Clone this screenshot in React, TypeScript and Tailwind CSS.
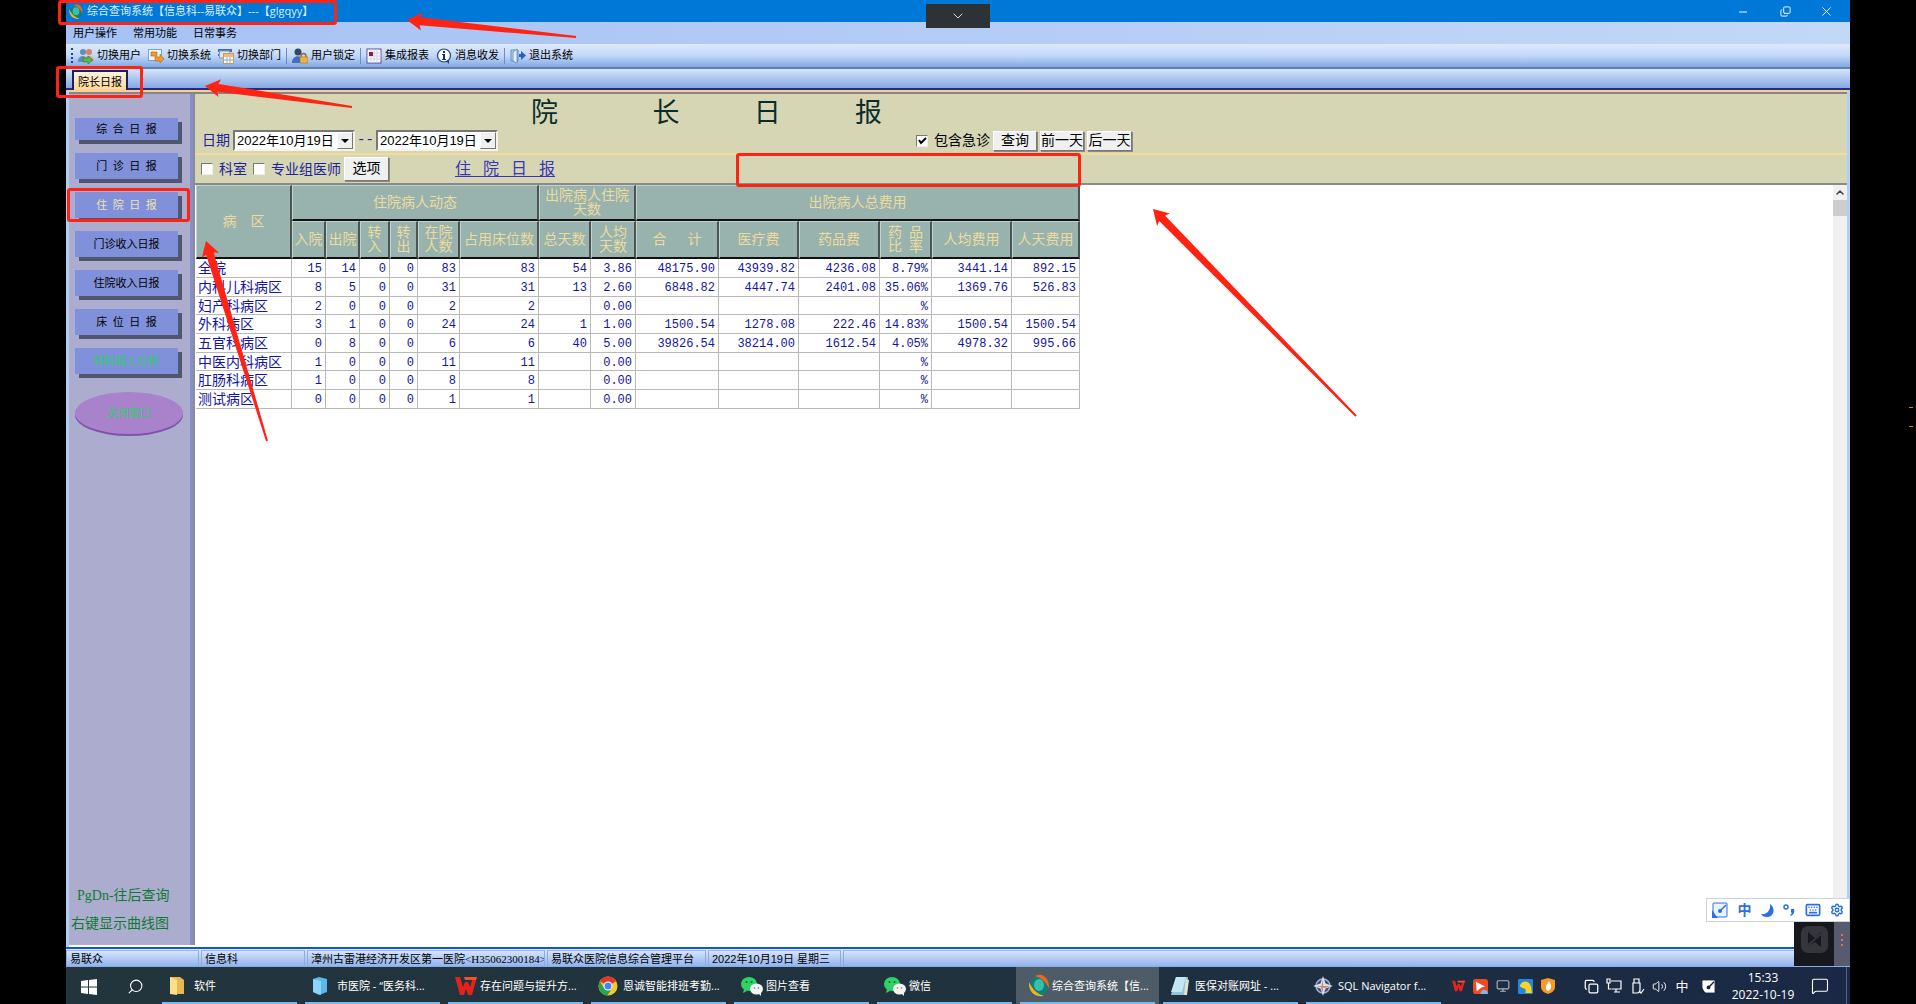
import React, { useState } from 'react';
import clsx from 'clsx';
import { ChevronDown, ChevronUp, Copy, Keyboard, MessageSquare, Minus, Monitor, Search, Settings, Volume2, X } from 'lucide-react';

const WARDS = [
  ['全院', '15', '14', '0', '0', '83', '83', '54', '3.86', '48175.90', '43939.82', '4236.08', '8.79%', '3441.14', '892.15'],
  ['内科儿科病区', '8', '5', '0', '0', '31', '31', '13', '2.60', '6848.82', '4447.74', '2401.08', '35.06%', '1369.76', '526.83'],
  ['妇产科病区', '2', '0', '0', '0', '2', '2', '', '0.00', '', '', '', '%', '', ''],
  ['外科病区', '3', '1', '0', '0', '24', '24', '1', '1.00', '1500.54', '1278.08', '222.46', '14.83%', '1500.54', '1500.54'],
  ['五官科病区', '0', '8', '0', '0', '6', '6', '40', '5.00', '39826.54', '38214.00', '1612.54', '4.05%', '4978.32', '995.66'],
  ['中医内科病区', '1', '0', '0', '0', '11', '11', '', '0.00', '', '', '', '%', '', ''],
  ['肛肠科病区', '1', '0', '0', '0', '8', '8', '', '0.00', '', '', '', '%', '', ''],
  ['测试病区', '0', '0', '0', '0', '1', '1', '', '0.00', '', '', '', '%', '', ''],
];

const COLUMN_WIDTHS = [
  'w-[96px]', 'w-[34px]', 'w-[34px]', 'w-[30px]', 'w-[28px]', 'w-[42px]', 'w-[79px]', 'w-[52px]',
  'w-[45px]', 'w-[83px]', 'w-[80px]', 'w-[81px]', 'w-[52px]', 'w-[80px]', 'w-[68px]',
];

const SUB_HEADERS = [
  '入院', '出院', '转\n入', '转\n出', '在院\n人数', '占用床位数', '总天数', '人均\n天数',
  '合      计', '医疗费', '药品费', '药  品\n比  率', '人均费用', '人天费用',
];

/* ---------- Icons ---------- */

const GlobeLogo = ({ className }: { className?: string }) => (
  <svg viewBox="0 0 24 24" className={className}>
    <ellipse cx="12" cy="12" rx="9" ry="10" fill="#0f7f78" />
    <ellipse cx="12" cy="11" rx="5" ry="6" fill="#37bfae" />
    <path d="M8 2c8-4 15 3 14 13-2-6-7-11-14-13z" fill="#f0641e" />
    <path d="M2 8c-1 9 6 16 15 14-7-2-12-7-15-14z" fill="#f6b321" />
  </svg>
);

const UsersIcon = () => (
  <svg viewBox="0 0 16 16" className="h-4 w-4">
    <circle cx="5" cy="4" r="3" fill="#5d8fb8" />
    <path d="M0 14c0-8 9-8 10 0z" fill="#5d8fb8" />
    <circle cx="11" cy="4" r="3" fill="#d98166" />
    <path d="M6 13c0-7 9-7 10 0z" fill="#e0a08a" />
    <path d="M5 10h5V8l5 4-5 4v-2H5z" fill="#57b847" stroke="#2b7a25" strokeWidth=".6" />
  </svg>
);

const SystemIcon = () => (
  <svg viewBox="0 0 16 16" className="h-4 w-4">
    <rect x=".5" y="1.500" width="13" height="11" fill="#e9f4fb" stroke="#6fa6c9" />
    <path d="M3 4h6v5h3V6l4 5-4 4v-2H7V8H3z" fill="#f09a2c" stroke="#b4620f" strokeWidth=".6" />
  </svg>
);

const DeptIcon = () => (
  <svg viewBox="0 0 16 16" className="h-4 w-4">
    <path d="M0 1h14v3H0zM0 6h5v2H0z" fill="#3f6fb5" />
    <rect x="1.500" y="3" width="10" height="7" fill="#dbe7f6" stroke="#7b9bc7" />
    <rect x="5.500" y="5.500" width="10" height="10" fill="#fff" stroke="#d6984a" />
    <path d="M6 6h9v3H6z" fill="#f2bd72" />
    <path d="M9 9v6M12 9v6M6 12h9" stroke="#8aa9d4" />
  </svg>
);

const UserLockIcon = () => (
  <svg viewBox="0 0 16 16" className="h-4 w-4">
    <circle cx="6" cy="4" r="3.500" fill="#3a4463" />
    <path d="M0 15c0-9 11-9 12 0z" fill="#3f6fc4" />
    <path d="M9 10V8a2 2 0 0 1 5 0v2" fill="none" stroke="#8a6a2c" strokeWidth="1.300" />
    <rect x="8" y="9" width="8" height="6" fill="#f0b341" stroke="#a86f14" strokeWidth=".6" />
  </svg>
);

const ReportIcon = () => (
  <svg viewBox="0 0 16 16" className="h-4 w-4">
    <rect x="1" y="1" width="14" height="14" fill="#fdfdff" stroke="#5a4fa0" />
    <path d="M1 5h14M1 8h14M1 11h14M5 1v14M8 1v14M11 1v14" stroke="#cfd0ea" />
    <path d="M3 4h4v4H3z" fill="#8f2430" />
  </svg>
);

const InfoIcon = () => (
  <svg viewBox="0 0 16 16" className="h-4 w-4">
    <circle cx="8" cy="7.500" r="6.500" fill="#fff" stroke="#1e3f8f" strokeWidth="1.200" />
    <path d="M7 3h2v2H7zM6 6h3v5h1v1H6v-1h1V7H6z" fill="#16307c" />
    <path d="M10 13l3 3v-4z" fill="#1e3f8f" />
  </svg>
);

const ExitIcon = () => (
  <svg viewBox="0 0 16 16" className="h-4 w-4">
    <path d="M1 2h7v11H1z" fill="#b9d2ee" stroke="#5f8fc4" />
    <path d="M3 4l4-3v14l-4-2z" fill="#e4eef8" stroke="#5a84b4" strokeWidth=".8" />
    <path d="M9 6h2V3l5 4.500-5 4.500V9H9z" fill="#2a62b8" />
  </svg>
);

const WindowsIcon = () => (
  <svg viewBox="0 0 16 16" className="h-4 w-4" fill="#fff">
    <path d="M0 2l7-1v6.500H0zM8 1l8-1v7.500H8zM0 8.500h7V15l-7-1zM8 8.500h8V16l-8-1z" />
  </svg>
);

const FolderIcon = () => (
  <svg viewBox="0 0 16 20" className="h-5 w-4">
    <path d="M1 1h10l4 3v14H1z" fill="#e8b94f" />
    <path d="M1 1l7 3v15l-7-1z" fill="#fbdf8c" />
  </svg>
);

const BoxIcon = () => (
  <svg viewBox="0 0 16 20" className="h-5 w-4">
    <path d="M1 3l6-2 8 2v13l-8 3-6-3z" fill="#5bb8ef" />
    <path d="M1 3l8 2v14l-8-3z" fill="#8bd4fb" />
  </svg>
);

const WpsIcon = ({ className }: { className?: string }) => (
  <svg viewBox="0 0 22 20" className={className}>
    <path d="M0 1h5l3 10 2-5h3l2 5 3-10h4l-5 18h-4l-2-6-2 6H5z" fill="#e3231b" />
    <path d="M9 1h13l-1 3H10z" fill="#f4532c" />
  </svg>
);

const ChromeIcon = () => (
  <svg viewBox="0 0 20 20" className="h-5 w-5">
    <circle cx="10" cy="10" r="9.500" fill="#f6c927" />
    <path d="M10 10L1.800 5.200A9.500 9.500 0 0 1 18.200 5.200z" fill="#e0392b" />
    <path d="M1.800 5.200A9.500 9.500 0 0 0 9.500 19.500L14 12 6 12z" fill="#2fa24c" />
    <circle cx="10" cy="10" r="4.500" fill="#fff" />
    <circle cx="10" cy="10" r="3.500" fill="#4285f4" />
  </svg>
);

const WechatIcon = () => (
  <svg viewBox="0 0 22 20" className="h-[22px] w-[22px]">
    <ellipse cx="8" cy="8" rx="8" ry="7" fill="#2fd266" />
    <path d="M3 13l-1 4 4-2z" fill="#2fd266" />
    <ellipse cx="15.500" cy="13" rx="6.500" ry="5.500" fill="#f1f3f2" />
    <path d="M17 17l3 3v-4z" fill="#f1f3f2" />
    <circle cx="5.500" cy="6" r="1" fill="#17572c" />
    <circle cx="10.500" cy="6" r="1" fill="#17572c" />
    <circle cx="13.500" cy="12" r=".8" fill="#777" />
    <circle cx="17.500" cy="12" r=".8" fill="#777" />
  </svg>
);

const NotepadIcon = () => (
  <svg viewBox="0 0 20 20" className="h-5 w-5">
    <path d="M6 1h12l-2 18H1z" fill="#8fc6dc" />
    <path d="M6 1h10l-4 15H1z" fill="#c4e6f2" />
    <path d="M16 3l3 1-2 15h-3z" fill="#e6e2cc" />
  </svg>
);

const CompassIcon = () => (
  <svg viewBox="0 0 20 20" className="h-5 w-5">
    <circle cx="10" cy="10" r="7" fill="#3c4d80" stroke="#a7b0c8" strokeWidth="1.500" />
    <path d="M10 0l2.500 7.500L20 10l-7.500 2.500L10 20l-2.500-7.500L0 10l7.500-2.500z" fill="#dde1ea" />
    <path d="M10 3v14l-2-5zM3 10h14l-5 2z" fill="#c98a72" />
  </svg>
);

const SketchPadIcon = ({ className, fill, stroke }: { className?: string; fill: string; stroke: string }) => (
  <svg viewBox="0 0 16 16" className={className}>
    <rect x="1" y="1" width="14" height="14" rx="1" fill={fill} stroke={stroke} />
    <path d="M0 8c2 2 3 5 6 8H0z" fill={stroke} />
    <path d="M14 3L8 9" stroke={stroke} strokeWidth="1.500" />
    <circle cx="8" cy="9" r="2" fill={stroke} />
  </svg>
);

const NetworkIcon = () => (
  <svg viewBox="0 0 16 16" className="h-4 w-4" fill="none" stroke="currentColor" strokeWidth="1.200">
    <path d="M5 3h10v8H6M8 14h6M10 11v3" />
    <path d="M1 1h3v4H1zM2.500 5v6h3" />
  </svg>
);

const UsbIcon = () => (
  <svg viewBox="0 0 16 16" className="h-4 w-4" fill="none" stroke="currentColor" strokeWidth="1.200">
    <path d="M5 5V1h5v4M4 5h7v6c0 2-1 4-3 4H4z" />
    <path d="M10 13l2 2 3-4" />
  </svg>
);

/* ---------- Annotations ---------- */

const Arrow = ({ tip, tail }: { tip: [number, number]; tail: [number, number] }) => {
  const dx = tail[0] - tip[0];
  const dy = tail[1] - tip[1];
  const len = Math.hypot(dx, dy);
  const [ux, uy] = [dx / len, dy / len];
  const at = (along: number, side: number) =>
    `${tip[0] + ux * along - uy * side},${tip[1] + uy * along + ux * side}`;
  const points = [at(0, 0), at(15, 9), at(13, 4), at(len, 1), at(len, -1), at(13, -4), at(15, -9)];
  return <polygon points={points.join(' ')} fill="#ff2314" />;
};

const Annotations = () => (
  <div className="pointer-events-none absolute inset-0 z-20">
    <div className="absolute top-0 left-[58px] h-[25px] w-[279px] rounded-[3px] border-3 border-[#ff2314]" />
    <div className="absolute top-[66px] left-[56px] h-8 w-[87px] rounded-[3px] border-3 border-[#ff2314]" />
    <div className="absolute top-[188px] left-[67px] h-[34px] w-[123px] rounded-[3px] border-3 border-[#ff2314]" />
    <div className="absolute top-[153px] left-[736px] h-[34px] w-[345px] rounded-[3px] border-3 border-[#ff2314]" />
    <svg className="h-full w-full">
      <Arrow tip={[407, 20]} tail={[576, 37]} />
      <Arrow tip={[205, 86]} tail={[352, 107]} />
      <Arrow tip={[206, 241]} tail={[267, 441]} />
      <Arrow tip={[1153, 209]} tail={[1356, 416]} />
    </svg>
  </div>
);

/* ---------- Window chrome ---------- */

const TitleBar = () => (
  <header className="flex h-[22px] shrink-0 items-center bg-[#0078d7] pt-px text-[11px] text-[#d9efff]">
    <GlobeLogo className="ml-[2px] h-4 w-4" />
    <h1 className="ml-[3px] flex-1 font-['Open_Sans','Noto_Sans_CJK_SC',sans-serif]">综合查询系统【信息科--易联众】---【glgqyy】</h1>
    <div className="flex items-center pr-4 text-white">
      <button aria-label="最小化" className="flex w-[42px] justify-center"><Minus className="h-3 w-3" strokeWidth={2} /></button>
      <button aria-label="还原" className="flex w-[42px] justify-center"><Copy className="h-[11px] w-[11px] -scale-y-100" strokeWidth={2} /></button>
      <button aria-label="关闭" className="flex w-[28px] justify-end"><X className="h-[15px] w-[15px]" strokeWidth={1.5} /></button>
    </div>
  </header>
);

const MenuBar = () => (
  <nav className="flex h-[22px] shrink-0 items-center gap-4 bg-linear-to-r from-[#a6c1f4] to-[#c2d8f7] pl-[7px] text-[11px] text-black">
    <button>用户操作</button>
    <button>常用功能</button>
    <button>日常事务</button>
  </nav>
);

const ToolButton = ({ icon, label }: { icon: React.ReactNode; label: string }) => (
  <button className="flex items-center gap-[3px] whitespace-nowrap">
    {icon}
    {label}
  </button>
);

const Divider = () => <span className="-mx-[2px] h-4 w-px bg-[#6a8ccb]" />;

const ToolBar = () => (
  <div className="flex h-[25px] shrink-0 items-center gap-[7px] border-b-2 border-[#5b7fb8] bg-linear-to-b from-[#dde9fc] via-[#c3d8f8] to-[#83a9e2] pl-[5px] text-[11px] text-black">
    <span className="-mr-[2px] h-[15px] border-l-2 border-dotted border-[#27417c]" />
    <ToolButton icon={<UsersIcon />} label="切换用户" />
    <ToolButton icon={<SystemIcon />} label="切换系统" />
    <ToolButton icon={<DeptIcon />} label="切换部门" />
    <Divider />
    <ToolButton icon={<UserLockIcon />} label="用户锁定" />
    <Divider />
    <ToolButton icon={<ReportIcon />} label="集成报表" />
    <ToolButton icon={<InfoIcon />} label="消息收发" />
    <Divider />
    <ToolButton icon={<ExitIcon />} label="退出系统" />
  </div>
);

const TabStrip = () => (
  <div className="flex h-[21px] shrink-0 items-end border-b-2 border-[#262a86] bg-linear-to-b from-[#d6e4fb] to-[#86a9e2] pl-[6px]">
    <button className="-mb-[2px] h-5 border-2 border-b-0 border-[#1d2060] bg-linear-to-b from-[#fdf3dc] to-[#fbd596] px-[4px] text-[11px] leading-[20px] text-black">
      院长日报
    </button>
  </div>
);

/* ---------- Sidebar ---------- */

const SIDE_BUTTONS = ['综  合  日  报', '门  诊  日  报', '住  院  日  报', '门诊收入日报', '住院收入日报', '床  位  日  报'];

const Sidebar = () => (
  <aside className="flex w-[126px] shrink-0 flex-col border-r-2 border-[#8b8b93] bg-[#acadce]">
    <div className="flex flex-1 flex-col border-r-3 border-[#8490cb] pt-6 pb-[7px] font-['Liberation_Serif','Noto_Sans_CJK_SC',serif]">
      <div className="flex flex-col gap-[13px] pr-[12px] pl-[6px] text-[11px]">
        {SIDE_BUTTONS.map((label, i) => (
          <button
            key={label}
            className={clsx(
              'whitespace-pre bg-[#8090da] shadow-[4px_4px_0_#50566e]',
              i === 0 ? 'h-[22px]' : 'h-[26px]',
              i === 2 ? 'text-[#f2e2a8]' : 'text-black',
            )}
          >
            {label}
          </button>
        ))}
        <button className="h-[26px] bg-[#8090da] text-[#2bcf6a] shadow-[4px_4px_0_#50566e]">材料收入分析</button>
      </div>
      <button className="mt-[18px] ml-[6px] h-[42px] w-[108px] rounded-[50%] bg-[#a883cc] text-[11px] text-[#2bcf6a] shadow-[0_2px_0_#7c55a8]">
        关闭窗口
      </button>
      <div className="mt-auto text-[14px] leading-7 text-[#107a30]">
        <p className="pl-[8px]">PgDn-往后查询</p>
        <p className="pl-[2px]">右键显示曲线图</p>
      </div>
    </div>
  </aside>
);

/* ---------- Report ---------- */

const DateSelect = ({ label }: { label: string }) => (
  <div className="relative">
    <select
      aria-label={label}
      className="h-[21px] w-[122px] appearance-none border-2 border-t-[#777] border-r-[#f4f4ea] border-b-[#f4f4ea] border-l-[#777] bg-white pl-[2px] font-['Liberation_Sans','Noto_Sans_CJK_SC',sans-serif] text-[13px] leading-[17px] text-black"
    >
      <option>2022年10月19日</option>
    </select>
    <span className="pointer-events-none absolute top-[2px] right-[2px] flex h-[17px] w-4 items-center justify-center border border-t-white border-r-[#777] border-b-[#777] border-l-white bg-[#f0f0f0]">
      <span className="border-x-4 border-t-4 border-x-transparent border-t-black" />
    </span>
  </div>
);

const PushButton = ({ children, className }: { children: React.ReactNode; className: string }) => (
  <button
    className={clsx(
      'border border-t-white border-r-[#777] border-b-[#777] border-l-white bg-[#f0f0f0] leading-none whitespace-nowrap text-black shadow-[1px_1px_0_#8a8a80]',
      className,
    )}
  >
    {children}
  </button>
);

const Check = ({ label, defaultChecked, className }: { label: string; defaultChecked?: boolean; className?: string }) => {
  const [checked, setChecked] = useState(!!defaultChecked);
  return (
    <label className={clsx('flex items-center gap-[6px]', className)}>
      <span className="relative flex h-3 w-3">
        <input
          type="checkbox"
          checked={checked}
          onChange={(e) => setChecked(e.target.checked)}
          className="h-3 w-3 appearance-none border border-t-[#777] border-r-[#eee] border-b-[#eee] border-l-[#777] bg-white"
        />
        {checked && (
          <svg viewBox="0 0 12 12" className="pointer-events-none absolute inset-0">
            <path d="M3 5l2 3 5-5" fill="none" stroke="#000" strokeWidth="2" />
          </svg>
        )}
      </span>
      {label}
    </label>
  );
};

const ReportHeader = () => (
  <div className="shrink-0 border-b-2 border-[#8a8a8a] bg-[#d6d6b5] text-[14px] text-[#22229a]">
    <div className="h-[61px] border-b-2 border-[#f2dc98]">
      <h2 className="h-9 pl-[336px] text-[27px] leading-[38px] whitespace-pre text-[#0c2c2c]">
        院              长           日           报
      </h2>
      <div className="flex h-[21px] items-center pl-[7px]">
        <span className="mr-[3px]">日期</span>
        <DateSelect label="开始日期" />
        <span className="w-[21px] text-center font-['Liberation_Mono',monospace]">--</span>
        <DateSelect label="结束日期" />
        <Check label="包含急诊" defaultChecked className="ml-[418px] text-black" />
        <PushButton className="ml-[3px] h-5 w-[44px]">查询</PushButton>
        <PushButton className="ml-[3px] h-5 w-[44px]">前一天</PushButton>
        <PushButton className="ml-[3px] h-5 w-[45px]">后一天</PushButton>
      </div>
    </div>
    <div className="flex h-[28px] items-center pl-[6px]">
      <Check label="科室" />
      <Check label="专业组医师" className="ml-[6px]" />
      <PushButton className="ml-[3px] h-6 w-[45px]">选项</PushButton>
      <h3 className="ml-[66px] text-[16px] whitespace-pre text-[#3a35b8] underline underline-offset-2">住   院   日   报</h3>
    </div>
  </div>
);

const HEAD_CELL =
  'border-t border-r-2 border-b-2 border-l border-t-[#c3d2cd] border-r-[#4a5452] border-b-[#111] border-l-[#c3d2cd] p-0 pt-px font-normal whitespace-pre';

const BODY_CELL = 'border-r border-b border-[#b9b9b9] p-0 pt-[2px] whitespace-nowrap';

const ReportTable = () => (
  <table className="w-[884px] table-fixed border-separate border-spacing-0 text-[14px] leading-[14px]">
    <colgroup>
      {COLUMN_WIDTHS.map((width, i) => (
        <col key={i} className={width} />
      ))}
    </colgroup>
    <thead className="bg-[#98b2ad] text-[#ecdc9e]">
      <tr className="h-9">
        <th rowSpan={2} className={HEAD_CELL}>病    区</th>
        <th colSpan={6} className={HEAD_CELL}>住院病人动态</th>
        <th colSpan={2} className={HEAD_CELL}>{'出院病人住院\n天数'}</th>
        <th colSpan={6} className={HEAD_CELL}>出院病人总费用</th>
      </tr>
      <tr className="h-[38px]">
        {SUB_HEADERS.map((label) => (
          <th key={label} className={HEAD_CELL}>{label}</th>
        ))}
      </tr>
    </thead>
    <tbody className="text-[#1414a0]">
      {WARDS.map(([name, ...values]) => (
        <tr key={name} className="h-[19px] nth-[3n]:h-[18px]">
          <td className={clsx(BODY_CELL, 'pl-[2px]')}>{name}</td>
          {values.map((value, i) => (
            <td key={i} className={clsx(BODY_CELL, "pr-[3px] text-right font-['Liberation_Mono',monospace] text-[12px]")}>
              {value}
            </td>
          ))}
        </tr>
      ))}
    </tbody>
  </table>
);

const Report = () => (
  <main className="flex min-w-0 flex-1 flex-col bg-white font-['Liberation_Serif','Noto_Sans_CJK_SC',serif]">
    <ReportHeader />
    <div className="flex min-h-0 flex-1">
      <div className="min-w-0 flex-1 pl-px">
        <ReportTable />
      </div>
      <div className="flex w-[14px] flex-col items-center bg-[#f0f0f0]">
        <ChevronUp className="h-[15px] w-3 text-[#444]" strokeWidth={3} />
        <span className="h-4 w-full bg-[#cdcdcd]" />
      </div>
    </div>
  </main>
);

const StatusBar = () => {
  const cell = 'flex items-center overflow-hidden border border-[#8cabe0] border-t-[#9ab5e6] pt-px pl-[3px] whitespace-nowrap';
  return (
    <footer className="flex h-[20px] shrink-0 gap-[2px] border-t-2 border-[#1458c8] bg-linear-to-b from-[#dfeafd] to-[#8eb1ec] pt-[1px] font-['Liberation_Serif','Noto_Sans_CJK_SC',serif] text-[11px] text-black">
      <span className={clsx(cell, 'w-[133px]')}>易联众</span>
      <span className={clsx(cell, 'w-[104px]')}>信息科</span>
      <span className={clsx(cell, 'w-[238px]')}>漳州古雷港经济开发区第一医院&lt;H35062300184&gt;</span>
      <span className={clsx(cell, 'w-[159px]')}>易联众医院信息综合管理平台</span>
      <span className={clsx(cell, "w-[133px] font-['Liberation_Sans','Noto_Sans_CJK_SC',sans-serif]")}>2022年10月19日 星期三</span>
      <span className={clsx(cell, 'flex-1')} />
    </footer>
  );
};

/* ---------- Desktop ---------- */

const TASKS: { icon: React.ReactNode; label: string; active?: boolean }[] = [
  { icon: <FolderIcon />, label: '软件' },
  { icon: <BoxIcon />, label: '市医院 - “医务科...' },
  { icon: <WpsIcon className="h-5 w-[22px]" />, label: '存在问题与提升方...' },
  { icon: <ChromeIcon />, label: '恩诚智能排班考勤...' },
  { icon: <WechatIcon />, label: '图片查看' },
  { icon: <WechatIcon />, label: '微信' },
  { icon: <GlobeLogo className="h-6 w-6" />, label: '综合查询系统【信...', active: true },
  { icon: <NotepadIcon />, label: '医保对账网址 - ...' },
  { icon: <CompassIcon />, label: 'SQL Navigator f...' },
];

const TaskBar = () => (
  <div className="flex h-[37px] shrink-0 items-stretch bg-linear-to-r from-[#22343c] via-[#20323e] to-[#1a2845] font-['Open_Sans','Noto_Sans_CJK_SC',sans-serif] text-[11px] text-white">
    <button aria-label="开始" className="flex w-[46px] shrink-0 items-center justify-center pt-[2px]"><WindowsIcon /></button>
    <button aria-label="搜索" className="flex w-[46px] shrink-0 items-center justify-center pt-px">
      <Search className="h-[17px] w-[17px] -scale-x-100" strokeWidth={1.5} />
    </button>
    {TASKS.map(({ icon, label, active }) => (
      <button
        key={label}
        className={clsx('flex w-[143px] shrink-0 items-stretch px-[4px] text-left', active && 'bg-[#4d5c66]')}
      >
        <span className="flex flex-1 items-center border-b-2 border-[#76b9ed] pt-[3px] pl-[7px]">
          <span className="flex w-[25px] items-center">{icon}</span>
          <span className="whitespace-nowrap">{label}</span>
        </span>
      </button>
    ))}
    <div className="ml-auto flex items-center pt-px">
      <div className="mr-[29px] flex items-center gap-[8px]">
        <WpsIcon className="h-3 w-[13px]" />
        <svg viewBox="0 0 16 16" className="h-[15px] w-[15px]">
          <rect width="16" height="16" rx="3" fill="#ee4a22" />
          <path d="M3 3l10 5-4 1-5 4z" fill="#fff" />
          <path d="M8 16c0-6 8-6 8 0z" fill="#7fb7e8" />
        </svg>
        <Monitor className="h-[14px] w-[14px] text-[#a9b3bc]" strokeWidth={2} />
        <svg viewBox="0 0 16 16" className="h-[15px] w-[15px]">
          <rect width="16" height="16" rx="1" fill="#2386e0" />
          <path d="M2 8c1-6 8-7 11-2 2 3 1 6 2 9H8c0-3 1-5-2-5z" fill="#ffd21f" />
        </svg>
        <svg viewBox="0 0 14 16" className="h-[16px] w-[14px]">
          <path d="M7 0l7 2v7c0 4-4 6-7 7-3-1-7-3-7-7V2z" fill="#f59a23" />
          <path d="M8 3c3 4 3 8-1 10-4-2-2-5 1-10z" fill="#fff" />
        </svg>
      </div>
      <div className="flex items-center gap-[7px]">
        <Copy className="h-[15px] w-[15px]" strokeWidth={2} />
        <NetworkIcon />
        <UsbIcon />
        <Volume2 className="h-[15px] w-[15px]" strokeWidth={1.5} />
        <span className="w-4 text-center text-[13px] leading-none">中</span>
        <SketchPadIcon className="ml-1 h-[15px] w-[15px]" fill="#fff" stroke="#16233a" />
      </div>
      <time className="ml-[12px] w-[70px] text-center font-['Open_Sans',sans-serif] text-[12px] leading-[17px]">
        15:33
        <br />
        2022-10-19
      </time>
      <button aria-label="通知" className="ml-[7px] flex w-[30px] justify-center">
        <MessageSquare className="h-[18px] w-[18px]" strokeWidth={1.5} />
      </button>
    </div>
    <span className="mr-[3px] ml-[11px] w-px bg-[#56657c]" />
  </div>
);

const FloatingTools = () => (
  <div className="absolute right-[66px] bottom-[38px] z-10 flex flex-col items-end">
    <div className="flex h-6 w-[144px] items-center justify-between border border-[#ccd3e0] bg-white px-[5px] text-[#2b6fe6]">
      <SketchPadIcon className="h-4 w-4" fill="#e9f2ff" stroke="#2b6fe6" />
      <span className="text-[14px] leading-none font-bold">中</span>
      <svg viewBox="0 0 13 13" className="h-[13px] w-[13px]">
        <path d="M9 0c6 4 4 13-3 13-3 0-5-1-6-3 6 1 10-4 9-10z" fill="currentColor" />
      </svg>
      <svg viewBox="0 0 12 12" className="h-3 w-3">
        <circle cx="3" cy="3" r="2" fill="none" stroke="currentColor" strokeWidth="1.500" />
        <path d="M8 5h3c1 3 0 5-3 7l-1-1c2-1 2-2 1-3z" fill="currentColor" />
      </svg>
      <Keyboard className="h-4 w-4" strokeWidth={2.5} />
      <Settings className="h-[14px] w-[14px]" strokeWidth={2.5} />
    </div>
    <div className="flex h-[44px] w-[56px]">
      <div className="flex flex-1 justify-center bg-[#16181e] pt-[4px]">
        <svg viewBox="0 0 27 27" className="h-[27px] w-[27px]">
          <rect width="27" height="27" rx="7" fill="#34363b" />
          <path d="M7 6l7 6 6-6v15l-6-5-7 4z" fill="#16181e" />
          <path d="M6 20L20 8" stroke="#34363b" strokeWidth="2" />
        </svg>
      </div>
      <div className="flex w-4 flex-col items-center justify-center gap-[3px] bg-[#585a6e] pb-2">
        <span className="h-[2px] w-[2px] bg-[#d07a5c]" />
        <span className="h-[2px] w-[2px] bg-[#d07a5c]" />
        <span className="h-[2px] w-[2px] bg-[#d07a5c]" />
      </div>
    </div>
  </div>
);

const App: React.FC = () => (
  <div className="relative flex h-screen flex-col overflow-hidden bg-black px-[66px] font-['Liberation_Sans','Noto_Sans_CJK_SC',sans-serif]">
    <TitleBar />
    <MenuBar />
    <ToolBar />
    <TabStrip />
    <div className="flex min-h-0 flex-1 flex-col border-x-3 border-t-2 border-x-[#b3cdf5] border-t-[#f8d08c] bg-white pb-[2px]">
      <div className="flex min-h-0 flex-1 border-t-2 border-[#85858b]">
        <Sidebar />
        <Report />
      </div>
    </div>
    <StatusBar />
    <TaskBar />

    <button aria-label="展开" className="absolute top-1 left-[926px] z-10 flex h-6 w-16 items-center justify-center bg-[#2c3235] text-[#ddd]">
      <ChevronDown className="h-4 w-4" strokeWidth={1.5} />
    </button>
    <FloatingTools />
    <div className="absolute top-[407px] right-[3px] h-5 w-1 border-y border-[#c98a1c]" />
    <Annotations />
  </div>
);

export default App;
